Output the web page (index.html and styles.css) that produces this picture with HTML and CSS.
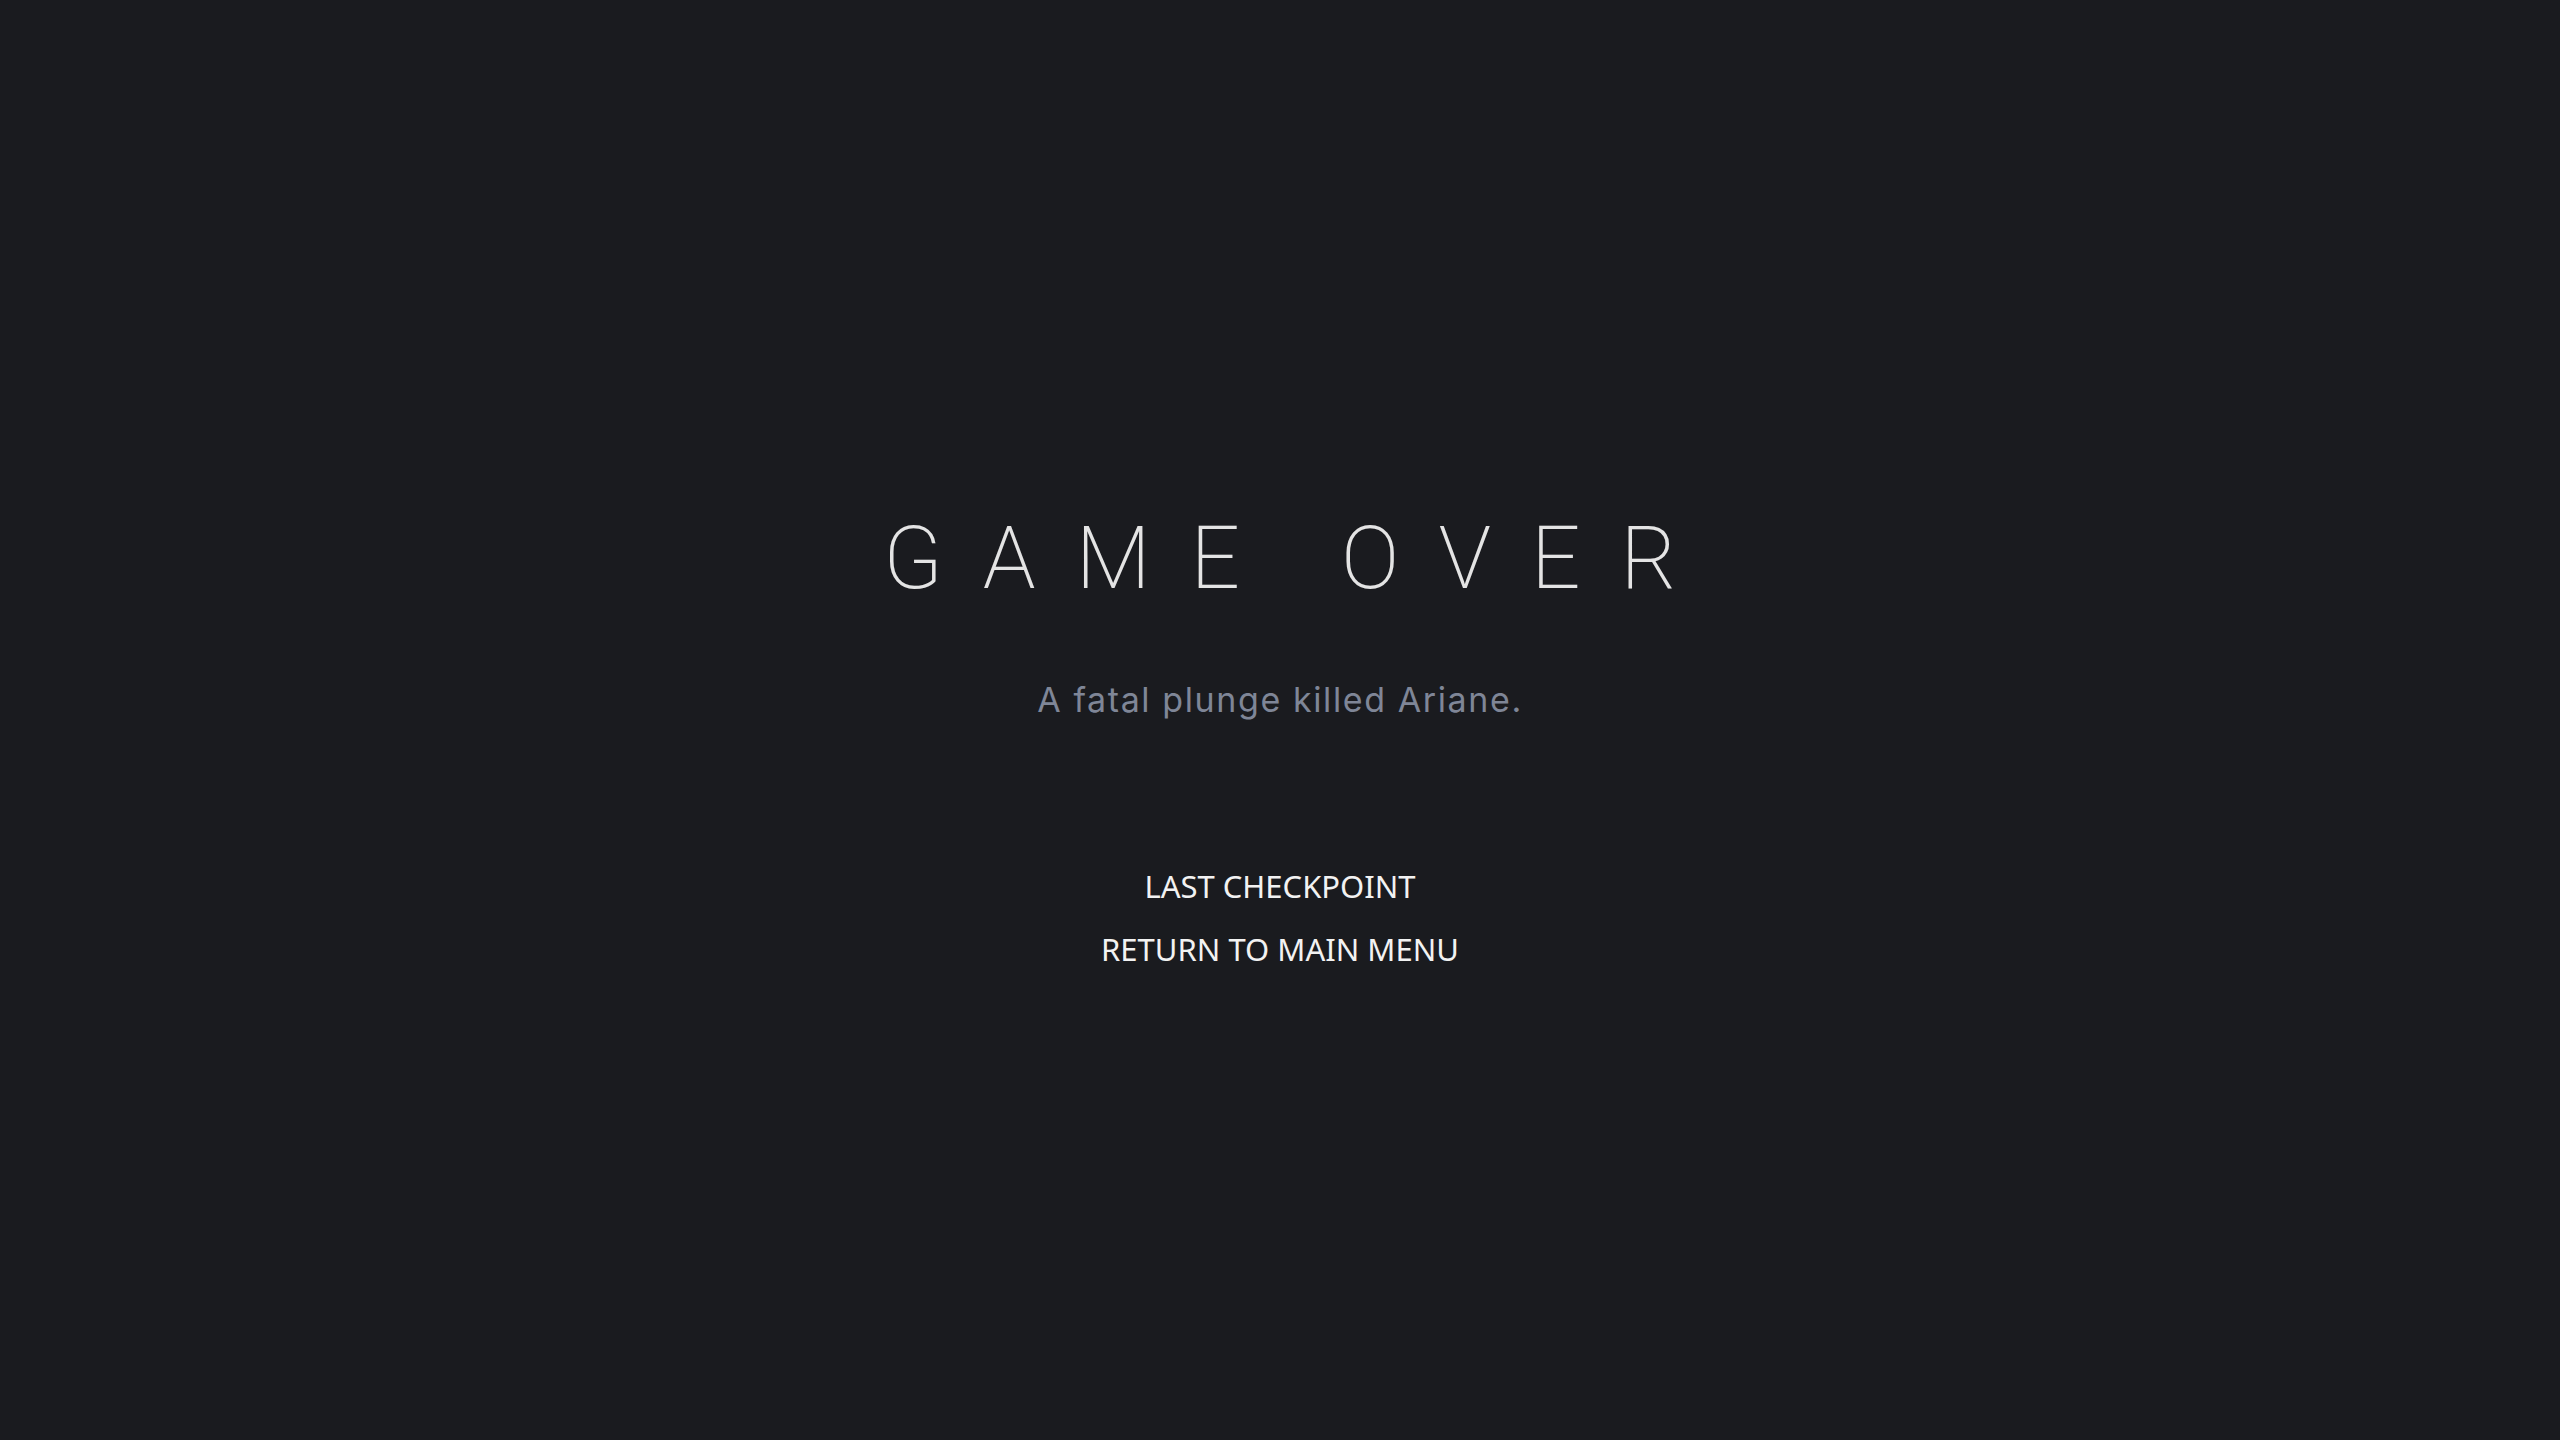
FILE: index.html
```html
<!DOCTYPE html>
<html lang="en">
<head>
    <meta charset="UTF-8">
    <meta name="viewport" content="width=device-width, initial-scale=1.0">
    <title>Game Over</title>
    <link rel="stylesheet" href="styles.css">
</head>
<body>
    <div class="screen">
        <h1 class="title"><span>GAME OVER</span></h1>
        <p class="cause">A fatal plunge killed Ariane.</p>
        <ul class="menu">
            <li><button class="menuBtn">LAST CHECKPOINT</button></li>
            <li><button class="menuBtn">RETURN TO MAIN MENU</button></li>
        </ul>
    </div>
</body>
</html>
```

FILE: styles.css
```css
body {
    margin: 0;
    background-color: #1a1b1f;
    color: #f0f0f0;
    font-family: "Noto Sans", sans-serif;
}

.screen {
    box-sizing: border-box;
    min-height: 100vh;
    padding-top: 46px;
    display: flex;
    flex-direction: column;
    align-items: center;
    justify-content: center;
}

/* Thin, widely spaced heading */
.title {
    margin: 0;
    font-family: Roboto, sans-serif;
    font-weight: 200;
    font-size: 87px;
    line-height: 1;
    color: #e4e4e4;
}

.title span {
    display: inline-block;
    letter-spacing: 40px;
    margin-right: -40px;
}

.cause {
    margin: 77px 0 0;
    font-family: Inter, sans-serif;
    font-size: 34px;
    letter-spacing: 1.6px;
    color: #7f8697;
}

.menu {
    list-style: none;
    margin: 145px 0 0;
    padding: 0;
    display: flex;
    flex-direction: column;
    align-items: center;
    gap: 20px;
}

.menuBtn {
    background: none;
    border: none;
    padding: 0;
    font-family: "Noto Sans", sans-serif;
    font-size: 31px;
    line-height: 43px;
    color: #f2f2f2;
    cursor: pointer;
}

.menuBtn:hover {
    color: #ffffff;
}
```
